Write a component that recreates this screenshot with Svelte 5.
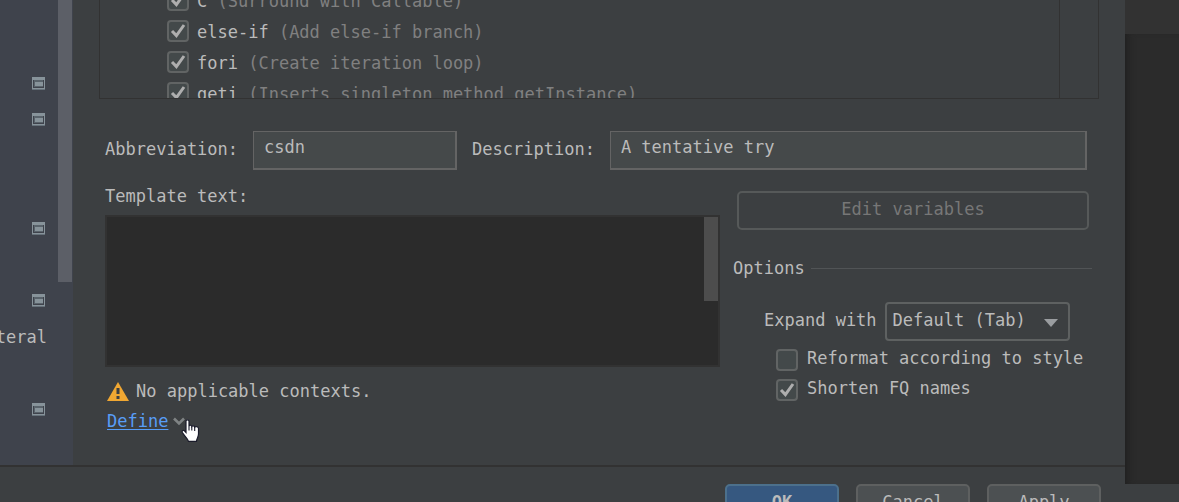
<script>
  let templates = $state([
    { name: "C", description: "Surround with Callable", enabled: true },
    { name: "else-if", description: "Add else-if branch", enabled: true },
    { name: "fori", description: "Create iteration loop", enabled: true },
    { name: "geti", description: "Inserts singleton method getInstance", enabled: true },
  ]);

  // rows of the settings tree, as far as they show at the left edge
  const treeRows = ["icon", "icon", "", "", "icon", "", "icon", "teral", "", "icon"];

  let abbreviation = $state("csdn");
  let description = $state("A tentative try");
  let templateText = $state("");
  let expandWith = $state("default");
  let reformat = $state(false);
  let shorten = $state(true);
</script>

{#snippet tick()}
  <svg class="tick" viewBox="0 0 22 22" aria-hidden="true">
    <path d="M5 11 L9.4 15.6 L17 5" />
  </svg>
{/snippet}

<div class="window">
  <div class="dialog">
    <div class="content">
      <aside class="tree">
        {#each treeRows as row}
          <div class="tree-row">
            {#if row === "icon"}
              <svg class="project-icon" viewBox="0 0 13 13" aria-hidden="true">
                <rect width="13" height="13" fill="#87939a" />
                <rect x="1" y="3" width="11" height="8" fill="#3f434c" />
                <rect x="2" y="3" width="9" height="7" fill="#59636b" />
                <rect x="3" y="5" width="8" height="4" fill="#87939a" />
                <rect y="12" width="13" height="1" fill="#66717a" />
              </svg>
            {:else}
              {row}
            {/if}
          </div>
        {/each}
        <div class="tree-thumb"></div>
      </aside>

      <main>
        <div class="list">
          <ul>
            {#each templates as t}
              <li>
                <label class="check">
                  <span class="box">
                    <input type="checkbox" bind:checked={t.enabled} />
                    {@render tick()}
                  </span>
                  <span>{t.name} <span class="hint">({t.description})</span></span>
                </label>
              </li>
            {/each}
          </ul>
          <div class="toolbar"></div>
        </div>

        <div class="fields">
          <label for="abbreviation">Abbreviation:</label>
          <input id="abbreviation" class="text short" type="text" bind:value={abbreviation} />
          <label for="description">Description:</label>
          <input id="description" class="text" type="text" bind:value={description} />
        </div>

        <div class="columns">
          <section class="editor">
            <label for="template">Template text:</label>
            <div class="code">
              <textarea id="template" bind:value={templateText}></textarea>
              <div class="code-thumb"></div>
            </div>
            <p class="warning">
              <svg width="22" height="19" viewBox="0 0 22 19" aria-hidden="true">
                <path d="M11 0 L22 19 H0 Z" fill="#f0a732" />
                <path d="M9.5 6 H12.5 V12 H9.5 Z M9.5 14 H12.5 V17 H9.5 Z" fill="#3c3f41" />
              </svg>
              <span>No applicable contexts.</span>
            </p>
            <div class="define">
              <a href="#define">Define</a>
              <svg width="12" height="9" viewBox="0 0 12 9" aria-hidden="true">
                <path d="M1 1.5 L6 6.5 L11 1.5" fill="none" stroke="#7f8384" stroke-width="2.6" />
              </svg>
              <svg class="pointer" width="19" height="24" viewBox="0 0 19 24" aria-hidden="true">
                <path
                  d="M5 2.2 C5 .3 8 .3 8 2.2 V7 C8.4 5.8 10.6 6 10.8 7.4 C11.4 6.4 13.4 6.7 13.7 8.1 C14.6 7.3 17.5 7.5 17.5 9.6 V15 C17.5 18 15.8 19 15.5 22.3 H7.5 C6.8 19.5 3.4 17 1.2 13.3 C.6 11.6 2.6 10.7 3.7 12 L5 13.5 Z"
                  fill="#ffffff"
                  stroke="#1b1c2b"
                  stroke-width="1.2"
                />
                <path d="M8 7 V11.5 M10.8 7.4 V11.5 M13.7 8 V12" stroke="#1b1c2b" stroke-width="1.1" />
              </svg>
            </div>
          </section>

          <section class="side">
            <button class="edit" type="button" disabled>Edit variables</button>
            <h2>Options</h2>
            <div class="expand">
              <label for="expand">Expand with</label>
              <div class="select">
                <select id="expand" bind:value={expandWith}>
                  <option value="default">Default (Tab)</option>
                  <option value="tab">Tab</option>
                  <option value="enter">Enter</option>
                  <option value="space">Space</option>
                </select>
                <svg width="14" height="8" viewBox="0 0 14 8" aria-hidden="true">
                  <path d="M0 0 H14 L7 8 Z" fill="#9a9da0" />
                </svg>
              </div>
            </div>
            <label class="check option">
              <span class="box">
                <input type="checkbox" bind:checked={reformat} />
                {@render tick()}
              </span>
              <span>Reformat according to style</span>
            </label>
            <label class="check option">
              <span class="box">
                <input type="checkbox" bind:checked={shorten} />
                {@render tick()}
              </span>
              <span>Shorten FQ names</span>
            </label>
          </section>
        </div>
      </main>
    </div>

    <footer>
      <button class="primary" type="button">OK</button>
      <button type="button">Cancel</button>
      <button type="button">Apply</button>
    </footer>
  </div>

  <div class="behind">
    <div class="behind-tabs"></div>
    <div class="behind-editor"></div>
    <div class="behind-status"></div>
  </div>
</div>

<style>
  :global(body) {
    background: #3c3f41;
  }

  .window {
    display: flex;
    height: 100vh;
    overflow: hidden;
    color: #bbbbbb;
    font-family: "DejaVu Sans Mono", "Liberation Mono", monospace;
    font-size: 17px;
    line-height: 24px;
  }

  input,
  textarea,
  select,
  button {
    box-sizing: border-box;
    margin: 0;
    font: inherit;
    color: inherit;
  }

  .dialog {
    flex: 1;
    display: flex;
    flex-direction: column;
    min-width: 0;
    background: #3c3f41;
  }

  .content {
    flex: 1;
    display: flex;
    min-height: 0;
  }

  /* settings tree */
  .tree {
    position: relative;
    box-sizing: border-box;
    flex: 0 0 73px;
    min-width: 0;
    display: flex;
    flex-direction: column;
    padding: 65px 26px 37px 0;
    background: #3f434c;
  }

  .tree-row {
    flex: 1;
    display: flex;
    align-items: center;
    justify-content: flex-end;
  }

  .project-icon {
    width: 13px;
    height: 13px;
    margin-right: 2px;
  }

  .tree-thumb {
    position: absolute;
    top: 0;
    right: 1px;
    width: 14px;
    height: 282px;
    background: #5c5f67;
  }

  main {
    flex: 1;
    min-width: 0;
  }

  /* template list */
  .list {
    display: flex;
    height: 98px;
    margin: 0 26px;
    overflow: hidden;
    border: 1px solid #323232;
    border-top: none;
  }

  ul {
    flex: 1;
    margin: -16px 0 0;
    padding: 0 0 0 67px;
    list-style: none;
  }

  li .check > span:last-child {
    padding-top: 3px;
  }

  .toolbar {
    width: 38px;
    border-left: 1px solid #323232;
  }

  .check {
    display: flex;
    align-items: center;
    gap: 8px;
    height: 31px;
    white-space: nowrap;
  }

  .hint {
    color: #808080;
  }

  .box {
    display: grid;
    width: 22px;
    height: 22px;
  }

  .box input {
    grid-area: 1 / 1;
    width: 22px;
    height: 22px;
    appearance: none;
    border: 2px solid #616464;
    border-radius: 4px;
    background: #43494a;
  }

  .tick {
    grid-area: 1 / 1;
    z-index: 1;
    width: 22px;
    height: 22px;
    visibility: hidden;
    pointer-events: none;
    fill: none;
    stroke: #aeaeae;
    stroke-width: 3;
  }

  .box input:checked + .tick {
    visibility: visible;
  }

  /* form */
  .fields {
    display: flex;
    align-items: center;
    gap: 15px;
    margin: 32px 38px 0 32px;
  }

  .fields label,
  .expand label {
    padding-bottom: 4px;
  }

  .text {
    flex: 1;
    min-width: 0;
    height: 39px;
    padding: 0 10px 6px;
    border: 1px solid #646464;
    border-width: 1px 2px 2px 1px;
    border-radius: 0;
    background: #45494a;
  }

  .text.short {
    flex: 0 0 204px;
  }

  .columns {
    display: grid;
    grid-template-columns: 1fr 359px;
    gap: 13px;
    margin: 14px 33px 0 32px;
  }

  .editor > label {
    display: block;
    margin-bottom: 7px;
  }

  .code {
    position: relative;
    display: flex;
  }

  textarea {
    width: 100%;
    height: 152px;
    padding: 4px 20px 4px 8px;
    resize: none;
    border: 2px solid #323232;
    background: #2b2b2b;
    overflow: hidden;
  }

  .code-thumb {
    position: absolute;
    top: 2px;
    right: 2px;
    width: 14px;
    height: 84px;
    background: #4d4d4d;
  }

  .warning {
    display: flex;
    align-items: center;
    gap: 7px;
    margin: 12px 2px 0;
  }

  .define {
    position: relative;
    display: flex;
    align-items: center;
    gap: 5px;
    margin: 6px 2px 0;
  }

  a {
    color: #589df6;
    text-underline-offset: 2px;
  }

  .pointer {
    position: absolute;
    top: 10px;
    left: 74px;
  }

  .edit {
    display: block;
    width: 352px;
    height: 39px;
    margin: 7px 3px 0 4px;
    padding: 0 0 4px;
    border: 2px solid #565959;
    border-radius: 5px;
    background: none;
    color: #777777;
  }

  h2 {
    display: flex;
    align-items: center;
    gap: 6px;
    margin: 26px 0 0;
    font-size: 17px;
    font-weight: normal;
  }

  h2::after {
    content: "";
    flex: 1;
    height: 1px;
    background: #515456;
  }

  .expand {
    display: flex;
    align-items: center;
    gap: 8px;
    margin: 22px 0 0 31px;
  }

  .select {
    display: grid;
    align-items: center;
    width: 185px;
  }

  .select select {
    grid-area: 1 / 1;
    height: 39px;
    padding: 0 0 3px 6px;
    appearance: none;
    border: 2px solid #5e6161;
    border-radius: 4px;
    background: #3c3f41;
  }

  .select svg {
    grid-area: 1 / 1;
    justify-self: end;
    margin: 2px 12px 0 0;
    pointer-events: none;
  }

  .option {
    gap: 9px;
    height: 30px;
    margin-left: 43px;
  }

  .expand + .option {
    margin-top: 4px;
  }

  .option > span:last-child {
    padding-bottom: 4px;
  }

  /* dialog buttons */
  footer {
    box-sizing: border-box;
    display: flex;
    justify-content: flex-end;
    gap: 17px;
    height: 37px;
    padding: 17px 24px 0;
    border-top: 2px solid #323232;
  }

  footer button {
    width: 114px;
    height: 39px;
    padding: 0 0 4px;
    border: 2px solid #5e6060;
    border-radius: 5px;
    background: #4c5052;
  }

  footer .primary {
    border-color: #4c708c;
    background: #365880;
    font-weight: bold;
  }

  /* main window behind the dialog */
  .behind {
    flex: 0 0 54px;
    display: flex;
    flex-direction: column;
  }

  .behind-tabs {
    height: 34px;
    background: #323232;
  }

  .behind-editor {
    flex: 1;
    background: #2b2b2b;
    box-shadow: inset 8px 0 8px -6px #1f1f1f;
  }

  .behind-status {
    height: 18px;
    background: #3c3f41;
  }
</style>
